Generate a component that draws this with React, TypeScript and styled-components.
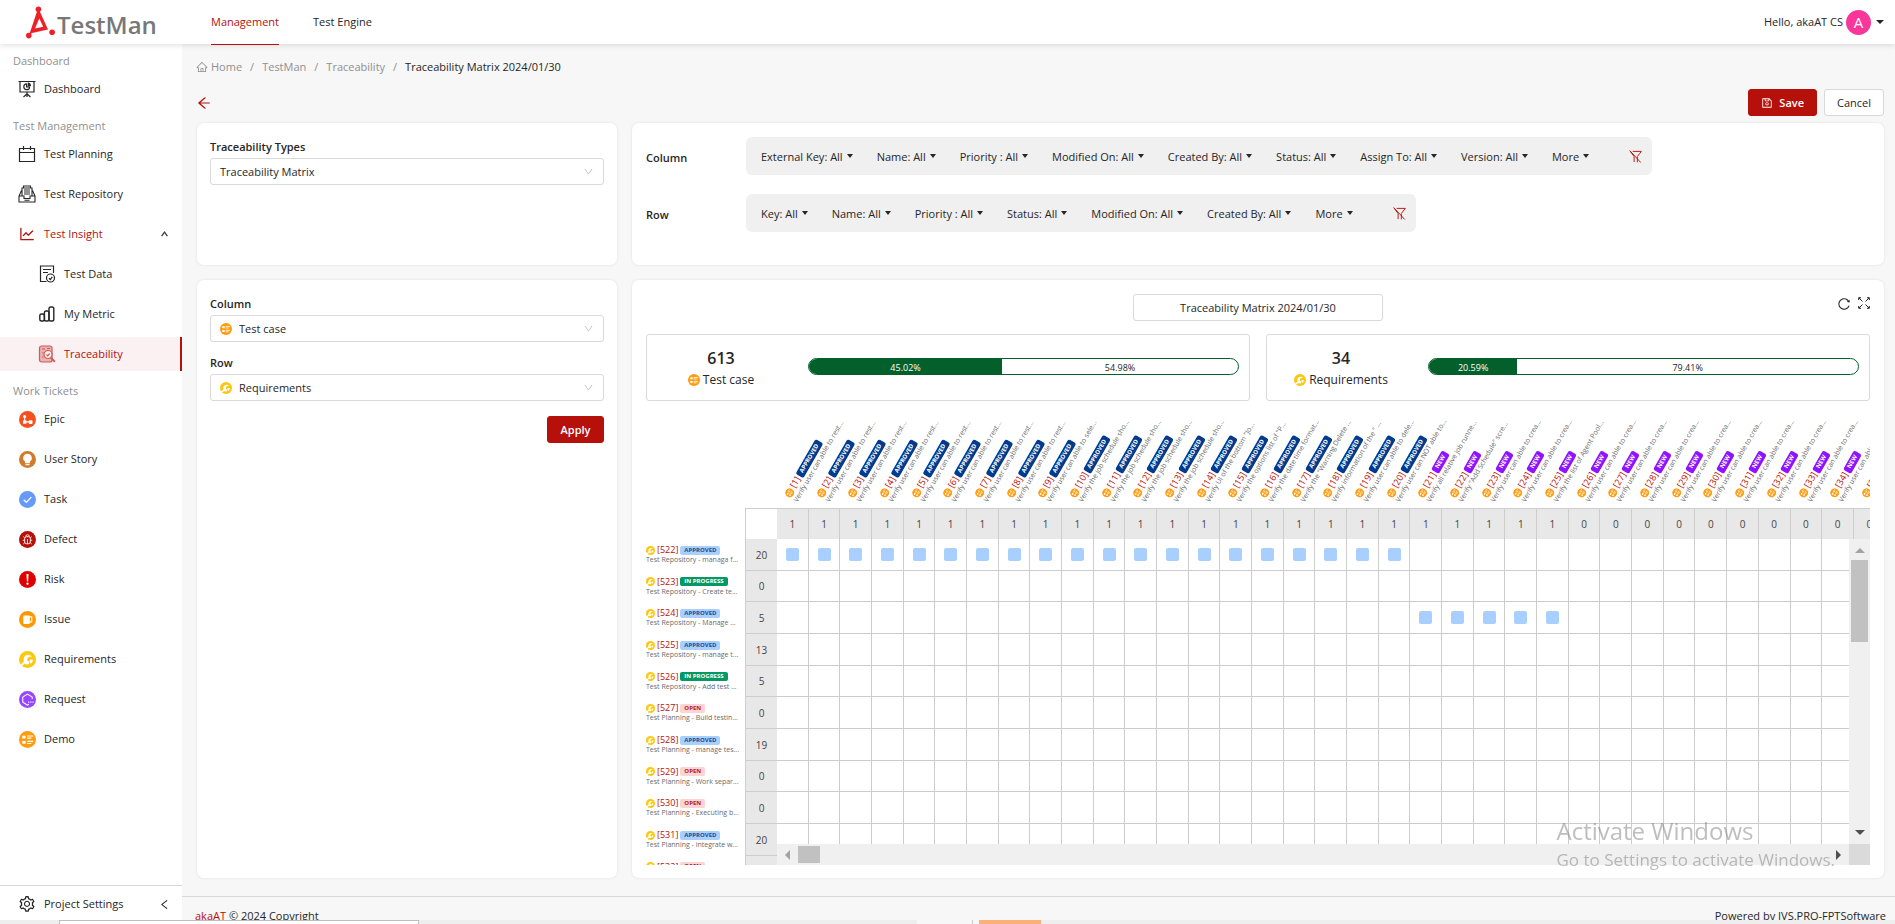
import React from "react";
import styled, { createGlobalStyle, css } from "styled-components";
import {
  AiOutlineArrowLeft,
  AiOutlineHome,
  AiOutlineLeft,
  AiOutlineLineChart,
  AiOutlineReload,
  AiOutlineSave,
  AiOutlineSetting,
} from "react-icons/ai";

const RED = "#b5100a";
const TEXT = "#262626";
const MUTED = "#8f8f8f";
const LINE = "#d9d9d9";
const GRID = "#cfcccc";

const GlobalStyle = createGlobalStyle`
  *, *::before, *::after { box-sizing: border-box; }
  body {
    margin: 0;
    background: #f7f7f7;
    color: ${TEXT};
    font-family: "Open Sans", "Noto Sans", sans-serif;
    font-size: 11px;
    line-height: 18px;
  }
  button, input, select { font: inherit; color: inherit; }
  a { color: inherit; text-decoration: none; }
`;

/* ---------- icons ---------- */

const Svg = styled.svg<{ $size: number }>`
  display: block;
  flex: none;
  width: ${(p) => p.$size}px;
  height: ${(p) => p.$size}px;
`;

type IconProps = { size?: number };

const Line: React.FC<React.PropsWithChildren<{ size: number; w?: number }>> = ({ size, w = 1.2, children }) => (
  <Svg $size={size} viewBox="0 0 18 18" fill="none" stroke="currentColor" strokeWidth={w} aria-hidden="true">
    {children}
  </Svg>
);

const BoardIcon = () => (
  <Line size={18} w={1.2}>
    <path d="M0.5 1.5h17M2 1.5v10.5h14V1.5M9 12v5M5.5 17 9 13.8 12.500 17" />
    <path d="M8.600 3.900a2.900 2.900 0 1 0 3 3h-3z" />
    <path d="M10.400 3.200a2.400 2.400 0 0 1 2 2.300h-2z" fill="currentColor" />
  </Line>
);
const CalendarIcon = () => (
  <Line size={18}>
    <path d="M1.500 3.500h15v13.000H1.500zM1.500 7.500h15M5.500 1v4M12.500 1v4" />
  </Line>
);
const RepositoryIcon = () => (
  <Line size={18} w={1.1}>
    <path d="M3.500 5.500 1 11v6h16v-6l-2.500-5.500M4 11V3h10v8M5.500 3V1h7v2M1 11h5v2.500h6V11h5" />
    <path d="M6 5h6M6 7h6M6 9h6M6.500 15.200h5" />
  </Line>
);
const DataIcon = () => (
  <Line size={18}>
    <path d="M15.500 8V1H2.500v15.500h6M5 4.500h8M5 7.500h5" />
    <circle cx="12.500" cy="13" r="4" />
    <path d="m11 13.300 1.300 1.200 2-2.700" />
  </Line>
);
const MetricIcon = () => (
  <Line size={18} w={1.4}>
    <rect x="1.800" y="9" width="4.600" height="7" rx="1.800" />
    <rect x="6.400" y="6" width="4.600" height="10" rx="1.800" />
    <rect x="11" y="2" width="4.800" height="14" rx="1.800" />
  </Line>
);
const TraceIcon = () => (
  <Svg $size={18} viewBox="0 0 18 18" fill="none" stroke="#cf5b57" strokeWidth="1.200" aria-hidden="true">
    <rect x="1.500" y="1" width="12.500" height="16" rx="2" fill="#e9b3b1" />
    <path d="M4 4h3M9 3.500h3M4 8h1.500M4 12h1.500" />
    <circle cx="10" cy="9.500" r="4" fill="#fbf1f2" />
    <path d="m8.500 9.500 1.200 1.300 1.900-2.300" />
    <path d="m12.800 12.600 4 4.200" strokeWidth="2" />
  </Svg>
);

const Disc: React.FC<React.PropsWithChildren<{ size?: number; color: string }>> = ({ size = 17, color, children }) => (
  <Svg $size={size} viewBox="0 0 18 18" fill="none" aria-hidden="true">
    <circle cx="9" cy="9" r="9" fill={color} />
    {children}
  </Svg>
);
const EpicIcon = () => (
  <Disc color="#f4511e">
    <path d="M6 6v5.500h6" stroke="#fff" strokeWidth="1.200" />
    <circle cx="6" cy="5.800" r="1.600" fill="#fff" />
    <rect x="4.300" y="10" width="3.500" height="3.500" fill="#fff" />
    <rect x="10.300" y="9.800" width="4" height="4" rx="1" fill="#fff" />
  </Disc>
);
const StoryIcon = () => (
  <Disc color="#d17c2b">
    <path d="M9 3a4.500 4.500 0 0 0-2.600 8.200V13h5.200v-1.800A4.500 4.500 0 0 0 9 3zM6.900 13.800h4.200V15H6.900z" fill="#fff" />
  </Disc>
);
const TaskIcon = () => (
  <Disc color="#6699f8">
    <path d="m5 9.200 2.800 2.800L13 6.500" stroke="#fff" strokeWidth="1.400" />
  </Disc>
);
const DefectIcon = () => (
  <Disc color="#b5100a">
    <rect x="6" y="6" width="6" height="7.500" rx="2" stroke="#fff" />
    <path d="M7 6a2 2 0 0 1 4 0M9 8.500v5M4 9.800h2M12 9.800h2M4.500 6l1.700 1.500M13.500 6l-1.700 1.500M4.500 13.800l1.700-1.500M13.500 13.800l-1.700-1.500" stroke="#fff" strokeWidth="0.900" />
  </Disc>
);
const RiskIcon = () => (
  <Disc color="#e10000">
    <path d="M7.900 3.300h2.200l-.5 7.700H8.400z" fill="#fff" />
    <circle cx="9" cy="13.500" r="1.200" fill="#fff" />
  </Disc>
);
const IssueIcon = () => (
  <Disc color="#ff9800">
    <rect x="4.500" y="4.800" width="7" height="9" rx="1.200" fill="#fff" />
    <path d="M11.500 6.200h2v5l-2 1" stroke="#fff" strokeWidth="1.200" />
  </Disc>
);
const RequirementIcon = ({ size }: IconProps) => (
  <Disc size={size} color="#fdc70c">
    <path d="M2.800 14.800 6 12" stroke="#fff" strokeWidth="2.200" strokeLinecap="round" />
    <path d="M5 11.500V8.500C5 6 7 4 9.500 4c1.800 0 3.200.8 4 2h-2.800L9 7.700 8.600 10l2.400 1.500-.5 2.500-3.500.3z" fill="#fff" />
    <path d="M11.500 9h3.300c0 2.200-1 3.600-2.500 4.400l-1-2.300z" fill="#fff" />
  </Disc>
);
const RequestIcon = () => (
  <Disc color="#9747ff">
    <path d="M14 8.500V6.300L9 3.300l-5 3v5.600l5 3 1.500-.8" stroke="#fff" strokeWidth="1.100" />
    <path d="M9.700 11.800h1.200M12 11.800h1.200M14.300 11.800h1.200" stroke="#fff" strokeWidth="1.300" />
  </Disc>
);
const CaseIcon = ({ size }: IconProps) => (
  <Disc size={size} color="#ff9c0f">
    <path d="M3.500 5H7v3H3.500zM3.500 10.500H7v3H3.500z" fill="#fff" />
    <path d="M8.500 5.300H15M8.500 7.500h4.500M8.500 11H15M8.500 13.200h4.500" stroke="#fff" strokeWidth="1.200" />
  </Disc>
);
const ClearFilterIcon = () => (
  <Svg $size={13} viewBox="0 0 14 14" fill="none" stroke={RED} strokeWidth="1" aria-hidden="true">
    <path d="M4 1.500h9.300L9 7v6.300M5.500 13V7L1.300 1.500M0.700 0.500l12 13" />
  </Svg>
);
const ExpandIcon = () => (
  <Svg $size={12} viewBox="0 0 12 12" fill="none" stroke="currentColor" strokeWidth="1" aria-hidden="true">
    <path d="M.7 3V.7H3M9 .7h2.300V3M11.300 9v2.300H9M3 11.300H.7V9M.9.900l3.600 3.600M11.100.900 7.500 4.500M11.100 11.100 7.500 7.500M.9 11.100l3.600-3.600" />
  </Svg>
);
const Chevron = styled.svg.attrs({ viewBox: "0 0 10 8", "aria-hidden": true })`
  position: absolute;
  right: 11px;
  bottom: 10px;
  width: 9px;
  height: 7px;
  fill: none;
  stroke: #bfbfbf;
  pointer-events: none;
`;
const Caret = styled.span<{ $size?: number }>`
  flex: none;
  border: ${(p) => p.$size ?? 3}px solid transparent;
  border-top: 4px solid ${TEXT};
  border-bottom: 0;
`;

/* ---------- header ---------- */

const Shell = styled.div`
  display: flex;
  flex-direction: column;
  height: 100vh;
  min-height: 640px;
`;
const Header = styled.header`
  position: relative;
  z-index: 1;
  display: flex;
  flex: none;
  align-items: center;
  height: 44px;
  padding: 0 11px 0 26px;
  background: #fff;
  box-shadow: 0 1px 6px rgba(0, 0, 0, 0.14);
`;
const Brand = styled.a`
  display: flex;
  align-items: center;
  width: 185px;
  color: #787878;
  font-size: 24px;
  font-weight: 600;
  line-height: 30px;
  svg { flex: none; width: 30px; height: 34px; margin-right: 1px; }
  span { padding-top: 6px; }
`;
const Tabs = styled.nav`
  display: flex;
  flex: 1;
  gap: 34px;
`;
const Tab = styled.a<{ $active?: boolean }>`
  height: 45px;
  line-height: 44px;
  ${(p) => p.$active && css`color: ${RED}; border-bottom: 1px solid ${RED};`}
`;
const Account = styled.button`
  display: flex;
  align-items: center;
  gap: 3px;
  padding: 0;
  border: 0;
  background: none;
`;
const Strong = styled.b`
  font-weight: 500;
`;
const Avatar = styled.span`
  width: 25px;
  height: 25px;
  margin-right: 2px;
  border-radius: 50%;
  background: #f9379b;
  color: #fff;
  font-size: 15px;
  line-height: 25px;
  text-align: center;
`;

/* ---------- sidebar ---------- */

const Body = styled.div`
  display: flex;
  flex: 1;
  min-height: 0;
`;
const Sidebar = styled.aside`
  display: flex;
  flex: none;
  flex-direction: column;
  width: 182px;
  background: #fff;
`;
const Menu = styled.nav`
  flex: 1;
  min-height: 0;
  padding-top: 3px;
  overflow: hidden;
`;
const GroupName = styled.h2`
  margin: 0;
  padding: 3px 0 0 13px;
  color: ${MUTED};
  font-size: 11px;
  font-weight: 400;
  line-height: 22px;
`;
const MenuItem = styled.a<{ $nested?: boolean; $selected?: boolean; $red?: boolean }>`
  display: flex;
  align-items: center;
  gap: 8px;
  height: 34px;
  margin-bottom: 6px;
  padding: 0 14px 0 ${(p) => (p.$nested ? 38 : 18)}px;
  ${(p) => p.$red && css`color: ${RED};`}
  ${(p) => p.$selected && css`color: ${RED}; background: #fbf1f2; border-right: 2px solid ${RED};`}
`;
const IconSlot = styled.span`
  display: flex;
  justify-content: center;
  width: 18px;
`;
const Grow = styled.span`
  flex: 1;
`;
const Settings = styled.div`
  display: flex;
  align-items: center;
  gap: 8px;
  height: 35px;
  padding: 2px 11px 0 18px;
  border-top: 1px solid ${LINE};
`;
const IconButton = styled.button`
  display: flex;
  padding: 0;
  border: 0;
  background: none;
`;

/* ---------- main ---------- */

const Main = styled.main`
  display: flex;
  flex: 1;
  flex-direction: column;
  min-width: 0;
`;
const Content = styled.div`
  display: flex;
  flex: 1;
  flex-direction: column;
  min-height: 0;
  padding: 14px 11px 18px 14px;
`;
const Crumbs = styled.nav`
  display: flex;
  align-items: center;
  gap: 8px;
  color: ${MUTED};
  a { display: flex; align-items: center; gap: 3px; }
  span[aria-current] { color: ${TEXT}; }
`;
const TitleBar = styled.div`
  display: flex;
  align-items: center;
  justify-content: space-between;
  margin: 13px 0 7px;
`;
const Actions = styled.div`
  display: flex;
  gap: 7px;
`;
const Button = styled.button<{ $primary?: boolean }>`
  display: flex;
  align-items: center;
  justify-content: center;
  gap: 6px;
  min-width: 57px;
  height: 27px;
  padding: 0 12px;
  border: 1px solid ${(p) => (p.$primary ? RED : LINE)};
  border-radius: 3px;
  background: ${(p) => (p.$primary ? RED : "#fff")};
  color: ${(p) => (p.$primary ? "#fff" : TEXT)};
  font-weight: ${(p) => (p.$primary ? 600 : 400)};
`;
const Panels = styled.div`
  display: grid;
  flex: 1;
  grid-template: 142px minmax(0, 1fr) / 420fr 1252fr;
  gap: 15px;
  min-height: 0;
  padding-left: 1px;
`;
const Panel = styled.section`
  display: flex;
  flex-direction: column;
  min-width: 0;
  min-height: 0;
  padding: 14px 14px 13px;
  border-radius: 7px;
  background: #fff;
  box-shadow: 0 0 3px rgba(0, 0, 0, 0.1);
`;
const FieldPanel = styled(Panel)`
  padding: 15px 13px 13px;
  ${Button} { align-self: flex-end; margin-top: 3px; }
`;
const Field = styled.div`
  position: relative;
  display: flex;
  flex-direction: column;
  margin-bottom: 12px;
  label { padding-bottom: 2px; font-weight: 600; line-height: 18px; }
`;
const Select = styled.select<{ $icon?: boolean }>`
  appearance: none;
  width: 100%;
  height: 27px;
  padding: 0 24px 0 ${(p) => (p.$icon ? 28 : 9)}px;
  border: 1px solid ${LINE};
  border-radius: 3px;
  background: #fff;
`;
const SelectIcon = styled.span`
  position: absolute;
  bottom: 7px;
  left: 10px;
`;

/* ---------- filters ---------- */

const FilterRow = styled.div`
  display: flex;
  align-items: center;
  margin-bottom: 19px;
  strong { width: 100px; padding-top: 4px; font-weight: 600; }
`;
const FilterBar = styled.div`
  display: flex;
  align-items: center;
  gap: 24px;
  height: 38px;
  padding: 0 10px 0 15px;
  border-radius: 6px;
  background: #f0f0f0;
`;
const Filter = styled.button`
  display: flex;
  align-items: center;
  gap: 4px;
  padding: 2px 0 0;
  border: 0;
  background: none;
  white-space: nowrap;
  ${Caret} { margin-bottom: 3px; }
  &:nth-last-child(2) { margin-right: 16px; }
`;

/* ---------- summary ---------- */

const NameRow = styled.div`
  display: grid;
  grid-template-columns: 1fr 250px 1fr;
  margin-bottom: 13px;
`;
const NameInput = styled.input`
  grid-column: 2;
  height: 27px;
  border: 1px solid ${LINE};
  border-radius: 3px;
  background: #fff;
  text-align: center;
`;
const Tools = styled.div`
  display: flex;
  gap: 7px;
  justify-content: flex-end;
  padding-top: 2px;
  svg { margin-top: 1px; }
`;
const Summaries = styled.div`
  display: grid;
  grid-template-columns: 1fr 1fr;
  gap: 16px;
`;
const Summary = styled.div`
  display: grid;
  grid-template-columns: 148px 1fr;
  gap: 13px;
  align-items: center;
  height: 67px;
  padding-right: 10px;
  border: 1px solid ${LINE};
  border-radius: 3px;
`;
const Total = styled.div`
  text-align: center;
  strong { display: block; font-size: 16px; font-weight: 600; line-height: 24px; }
  span { display: flex; align-items: center; justify-content: center; gap: 3px; font-size: 12px; line-height: 20px; }
`;
const Bar = styled.div`
  display: flex;
  height: 17px;
  margin-top: -2px;
  overflow: hidden;
  border: 1px solid #04602b;
  border-radius: 9px;
  font-size: 9px;
  line-height: 17px;
  text-align: center;
  span { flex: 1; }
  span:first-child { flex: none; background: #04602b; color: #fff; }
`;

/* ---------- matrix ---------- */

const Viewport = styled.div`
  position: relative;
  flex: 1;
  min-height: 0;
  overflow: hidden;
`;
const Matrix = styled.table`
  width: calc(131px + (100% - 131px) * 70 / 69);
  table-layout: fixed;
  border-collapse: separate;
  border-spacing: 0;
  td, th { padding: 0; font-weight: 400; }
  col:nth-child(1) { width: 99px; }
  col:nth-child(2) { width: 32px; }
  tbody tr { height: 32px; }
  tbody tr:nth-child(3n + 2) { height: 31px; }
`;
const HeadCell = styled.th`
  height: 107px;
  vertical-align: bottom;
`;
const Slanted = styled.div`
  width: 96px;
  height: 20px;
  margin: 0 0 4px 23px;
  transform: rotate(-60deg);
  transform-origin: bottom left;
  text-align: left;
`;
const Ticket = styled.div`
  display: flex;
  align-items: center;
  gap: 2px;
  height: 10px;
  color: ${RED};
  font-size: 9px;
  line-height: 10px;
  white-space: nowrap;
`;
const TicketTitle = styled.div`
  height: 10px;
  overflow: hidden;
  color: #6b6b6b;
  font-size: 7px;
  line-height: 10px;
  white-space: nowrap;
`;
const tones = {
  APPROVED: ["#a8cffd", "#1d4a8f"],
  APPROVED_DARK: ["#003b8e", "#fff"],
  NEW: ["#9013fe", "#fff"],
  "IN PROGRESS": ["#059862", "#fff"],
  OPEN: ["#fdd3d3", "#b02020"],
} as const;
type Tone = keyof typeof tones;
const Badge = styled.span<{ $tone: Tone }>`
  height: 9px;
  padding: 0 4px;
  border-radius: 2px;
  background: ${(p) => tones[p.$tone][0]};
  color: ${(p) => tones[p.$tone][1]};
  font-size: 6px;
  font-weight: 700;
  line-height: 9px;
`;
const CountCell = styled.td<{ $head?: boolean; $blank?: boolean }>`
  height: 31px;
  border: 0 solid ${GRID};
  border-width: ${(p) => (p.$blank ? "1px 0 0 1px" : p.$head ? "1px 1px 0 0" : "0 0 1px 1px")};
  background: ${(p) => (p.$blank ? "#fff" : "#e8e8e8")};
  color: #444;
  font-size: 10px;
  line-height: 18px;
  text-align: center;
`;
const LabelCell = styled.th`
  text-align: left;
  vertical-align: middle;
`;
const Cell = styled.td`
  border: 0 solid ${GRID};
  border-width: 0 1px 1px 0;
`;
const Mark = styled.span`
  display: block;
  width: 13px;
  height: 13px;
  margin: 0 auto;
  border-radius: 2px;
  background: #a8cffd;
`;

/* Scroll bars of the matrix, over its right and bottom edges */
const VBar = styled.div`
  position: absolute;
  top: 138px;
  right: 0;
  bottom: 21px;
  display: flex;
  flex-direction: column;
  align-items: center;
  width: 21px;
  padding: 9px 0;
  background: #f0f0f0;
`;
const HBar = styled.div`
  position: absolute;
  right: 21px;
  bottom: 0;
  left: 131px;
  display: flex;
  align-items: center;
  height: 21px;
  padding: 0 8px;
  background: #f0f0f0;
`;
const Corner = styled.div`
  position: absolute;
  right: 0;
  bottom: 0;
  width: 21px;
  height: 21px;
  background: #dadada;
`;
const Thumb = styled.div<{ $w: number; $h: number }>`
  width: ${(p) => p.$w}px;
  height: ${(p) => p.$h}px;
  margin: ${(p) => (p.$h > p.$w ? "7px 0 auto" : "0 auto 0 8px")};
  background: #c1c1c1;
`;
const Arrow = styled.span<{ $dir: "top" | "bottom" | "left" | "right"; $dark?: boolean }>`
  border: 5px solid transparent;
  border-${(p) => p.$dir}: 0;
  border-${(p) => ({ top: "bottom", bottom: "top", left: "right", right: "left" })[p.$dir]}-color: ${(p) => (p.$dark ? "#505050" : "#a3a3a3")};
`;

/* ---------- footer and desktop overlays ---------- */

const Footer = styled.footer`
  display: flex;
  flex: none;
  justify-content: space-between;
  height: 24px;
  padding: 10px 9px 0 13px;
  overflow: hidden;
  border-top: 1px solid ${LINE};
  em { color: ${RED}; font-style: normal; }
`;
const Taskbar = styled.div`
  display: grid;
  flex: none;
  grid-template-columns: 59px 360px 498px 56px 6px 62px 1fr;
  height: 4px;
  background: #eee;
  i:nth-child(2) { border: 1px solid #bdbdbd; border-bottom: 0; background: #fff; }
  i:nth-child(4) { border-right: 1px solid #ccc; background: #f7f7f7; }
  i:nth-child(5) { background: #f7f7f7; }
  i:nth-child(6) { background: #fbb077; }
`;
const Watermark = styled.div`
  position: fixed;
  right: 60px;
  bottom: 51px;
  z-index: 2;
  color: rgba(110, 110, 110, 0.45);
  font-size: 17px;
  line-height: 26px;
  pointer-events: none;
  strong { display: block; font-size: 24px; font-weight: 400; line-height: 32px; }
`;

/* ---------- data ---------- */

const tickets: [string, React.ReactNode][] = [
  ["Epic", <EpicIcon />],
  ["User Story", <StoryIcon />],
  ["Task", <TaskIcon />],
  ["Defect", <DefectIcon />],
  ["Risk", <RiskIcon />],
  ["Issue", <IssueIcon />],
  ["Requirements", <RequirementIcon />],
  ["Request", <RequestIcon />],
  ["Demo", <CaseIcon />],
];

const columnFilters = ["External Key: All", "Name: All", "Priority : All", "Modified On: All", "Created By: All", "Status: All", "Assign To: All", "Version: All", "More"];
const rowFilters = ["Key: All", "Name: All", "Priority : All", "Status: All", "Modified On: All", "Created By: All", "More"];

const crea = "Verify user can able to crea...";
const rest = "Verify user can able to rest...";
const sho = "Verify the job schedule sho...";
const caseTitles = [
  rest, rest, rest, rest, rest, rest, rest, rest,
  "Verify user can able to sele...",
  sho, sho, sho, sho,
  'Verify UI of the bottom "Jo...',
  'Verify the options list of "P...',
  "Verify the date time format...",
  'Verify the "Warning Delete ...',
  'Verify information of the " ...',
  "Verify user can able to dele...",
  "Verify user can NOT able to...",
  "Verify all relative job runne...",
  'Verify "Add Schedule" scre...',
  crea, crea,
  "Verify the list of Agent Pool...",
  crea, crea, crea, crea, crea, crea, crea, crea,
  "Verify user can able to...",
  crea,
];

const rows: { id: number; tone: Tone; title: string; count: number; from: number; to: number }[] = [
  { id: 522, tone: "APPROVED", title: "Test Repository - managa f...", count: 20, from: 0, to: 20 },
  { id: 523, tone: "IN PROGRESS", title: "Test Repository - Create te...", count: 0, from: 0, to: 0 },
  { id: 524, tone: "APPROVED", title: "Test Repository - Manage ...", count: 5, from: 20, to: 25 },
  { id: 525, tone: "APPROVED", title: "Test Repository - manage t...", count: 13, from: 0, to: 0 },
  { id: 526, tone: "IN PROGRESS", title: "Test Repository - Add test ...", count: 5, from: 0, to: 0 },
  { id: 527, tone: "OPEN", title: "Test Planning - Build testin...", count: 0, from: 0, to: 0 },
  { id: 528, tone: "APPROVED", title: "Test Planning - manage tes...", count: 19, from: 0, to: 0 },
  { id: 529, tone: "OPEN", title: "Test Planning - Work separ...", count: 0, from: 0, to: 0 },
  { id: 530, tone: "OPEN", title: "Test Planning - Executing b...", count: 0, from: 0, to: 0 },
  { id: 531, tone: "APPROVED", title: "Test Planning - integrate w...", count: 20, from: 0, to: 0 },
  { id: 532, tone: "OPEN", title: "", count: 0, from: 0, to: 0 },
];

const Filters = ({ title, items }: { title: string; items: string[] }) => (
  <FilterRow>
    <strong>{title}</strong>
    <FilterBar>
      {items.map((item) => (
        <Filter key={item} type="button">
          {item}
          <Caret />
        </Filter>
      ))}
      <IconButton type="button" aria-label={`Clear ${title} filters`}>
        <ClearFilterIcon />
      </IconButton>
    </FilterBar>
  </FilterRow>
);

const Picker = ({ id, label, value, icon }: { id: string; label: string; value: string; icon?: React.ReactNode }) => (
  <Field>
    <label htmlFor={id}>{label}</label>
    <Select id={id} $icon={!!icon} defaultValue={value}>
      <option>{value}</option>
    </Select>
    {icon && <SelectIcon>{icon}</SelectIcon>}
    <Chevron>
      <path d="M1 1l4 6 4-6" />
    </Chevron>
  </Field>
);

const Coverage = ({ total, name, icon, percent }: { total: number; name: string; icon: React.ReactNode; percent: number }) => (
  <Summary>
    <Total>
      <strong>{total}</strong>
      <span>
        {icon}
        {name}
      </span>
    </Total>
    <Bar>
      <span style={{ width: `${percent}%` }}>{percent.toFixed(2)}%</span>
      <span>{(100 - percent).toFixed(2)}%</span>
    </Bar>
  </Summary>
);

export default function App() {
  return (
    <Shell>
      <GlobalStyle />
      <Header>
        <Brand href="#">
          <svg viewBox="0 0 30 34" fill="#ee2027" aria-hidden="true">
            <circle cx="12.400" cy="4.300" r="2.800" />
            <circle cx="2.800" cy="30.600" r="2.800" />
            <circle cx="26.100" cy="27.300" r="2.800" />
            <path fillRule="evenodd" d="M11.200 6h2.400l8.400 18.500-16 3.400-3 2.400zM13.300 13.500 9 23.600l8.200-1.800z" />
          </svg>
          <span>TestMan</span>
        </Brand>
        <Tabs>
          <Tab href="#" $active>Management</Tab>
          <Tab href="#">Test Engine</Tab>
        </Tabs>
        <Account type="button">
          <span>Hello, <Strong>akaAT CS</Strong></span>
          <Avatar>A</Avatar>
          <Caret $size={4} />
        </Account>
      </Header>

      <Body>
        <Sidebar>
          <Menu>
            <GroupName>Dashboard</GroupName>
            <MenuItem href="#"><IconSlot><BoardIcon /></IconSlot>Dashboard</MenuItem>
            <GroupName>Test Management</GroupName>
            <MenuItem href="#"><IconSlot><CalendarIcon /></IconSlot>Test Planning</MenuItem>
            <MenuItem href="#"><IconSlot><RepositoryIcon /></IconSlot>Test Repository</MenuItem>
            <MenuItem href="#" $red>
              <IconSlot><AiOutlineLineChart size={18} /></IconSlot>
              Test Insight
              <Grow />
              <svg width="7" height="6" viewBox="0 0 7 6" fill="none" stroke="#444" strokeWidth="1.400" aria-hidden="true">
                <path d="M.6 5.200 3.500 1.200l2.900 4" />
              </svg>
            </MenuItem>
            <MenuItem href="#" $nested><IconSlot><DataIcon /></IconSlot>Test Data</MenuItem>
            <MenuItem href="#" $nested><IconSlot><MetricIcon /></IconSlot>My Metric</MenuItem>
            <MenuItem href="#" $nested $selected><IconSlot><TraceIcon /></IconSlot>Traceability</MenuItem>
            <GroupName>Work Tickets</GroupName>
            {tickets.map(([name, icon]) => (
              <MenuItem key={name} href="#"><IconSlot>{icon}</IconSlot>{name}</MenuItem>
            ))}
          </Menu>
          <Settings>
            <IconSlot><AiOutlineSetting size={18} /></IconSlot>
            <a href="#">Project Settings</a>
            <Grow />
            <IconButton type="button" aria-label="Collapse menu"><AiOutlineLeft size={13} /></IconButton>
          </Settings>
        </Sidebar>

        <Main>
          <Content>
            <Crumbs aria-label="Breadcrumb">
              <a href="#"><AiOutlineHome size={12} />Home</a>/
              <a href="#">TestMan</a>/
              <a href="#">Traceability</a>/
              <span aria-current="page">Traceability Matrix 2024/01/30</span>
            </Crumbs>
            <TitleBar>
              <IconButton type="button" aria-label="Back"><AiOutlineArrowLeft size={16} color={RED} /></IconButton>
              <Actions>
                <Button type="button" $primary><AiOutlineSave size={12} />Save</Button>
                <Button type="button">Cancel</Button>
              </Actions>
            </TitleBar>
            <Panels>
              <FieldPanel>
                <Picker id="type" label="Traceability Types" value="Traceability Matrix" />
              </FieldPanel>
              <Panel>
                <Filters title="Column" items={columnFilters} />
                <Filters title="Row" items={rowFilters} />
              </Panel>
              <FieldPanel>
                <Picker id="column" label="Column" value="Test case" icon={<CaseIcon size={12} />} />
                <Picker id="row" label="Row" value="Requirements" icon={<RequirementIcon size={12} />} />
                <Button type="button" $primary>Apply</Button>
              </FieldPanel>
              <Panel>
                <NameRow>
                  <NameInput aria-label="Matrix name" defaultValue="Traceability Matrix 2024/01/30" />
                  <Tools>
                    <IconButton type="button" aria-label="Reload"><AiOutlineReload size={14} /></IconButton>
                    <IconButton type="button" aria-label="Full screen"><ExpandIcon /></IconButton>
                  </Tools>
                </NameRow>
                <Summaries>
                  <Coverage total={613} name="Test case" icon={<CaseIcon size={12} />} percent={45.02} />
                  <Coverage total={34} name="Requirements" icon={<RequirementIcon size={12} />} percent={20.59} />
                </Summaries>
                <Viewport>
                  <Matrix>
                    <colgroup>
                      <col />
                      <col />
                      {caseTitles.map((_, i) => <col key={i} />)}
                    </colgroup>
                    <thead>
                      <tr>
                        <td />
                        <td />
                        {caseTitles.map((title, i) => (
                          <HeadCell key={i} scope="col">
                            <Slanted>
                              <Ticket>
                                <CaseIcon size={9} />[{i + 1}]
                                <Badge $tone={i < 20 ? "APPROVED_DARK" : "NEW"}>{i < 20 ? "APPROVED" : "NEW"}</Badge>
                              </Ticket>
                              <TicketTitle>{title}</TicketTitle>
                            </Slanted>
                          </HeadCell>
                        ))}
                      </tr>
                      <tr>
                        <td />
                        <CountCell $head $blank />
                        {caseTitles.map((_, i) => <CountCell key={i} $head>{i < 25 ? 1 : 0}</CountCell>)}
                      </tr>
                    </thead>
                    <tbody>
                      {rows.map((row) => (
                        <tr key={row.id}>
                          <LabelCell scope="row">
                            <Ticket>
                              <RequirementIcon size={9} />[{row.id}]
                              <Badge $tone={row.tone}>{row.tone}</Badge>
                            </Ticket>
                            <TicketTitle>{row.title}</TicketTitle>
                          </LabelCell>
                          <CountCell>{row.count}</CountCell>
                          {caseTitles.map((_, i) => <Cell key={i}>{i >= row.from && i < row.to && <Mark />}</Cell>)}
                        </tr>
                      ))}
                    </tbody>
                  </Matrix>
                  <VBar>
                    <Arrow $dir="top" />
                    <Thumb $w={17} $h={82} />
                    <Arrow $dir="bottom" $dark />
                  </VBar>
                  <HBar>
                    <Arrow $dir="left" />
                    <Thumb $w={22} $h={17} />
                    <Arrow $dir="right" $dark />
                  </HBar>
                  <Corner />
                </Viewport>
              </Panel>
            </Panels>
          </Content>
          <Footer>
            <span><em>akaAT</em> © 2024 Copyright</span>
            <span>Powered by <Strong>IVS.PRO-FPTSoftware</Strong></span>
          </Footer>
        </Main>
      </Body>
      <Taskbar aria-hidden="true"><i /><i /><i /><i /><i /><i /><i /></Taskbar>
      <Watermark>
        <strong>Activate Windows</strong>
        Go to Settings to activate Windows.
      </Watermark>
    </Shell>
  );
}
